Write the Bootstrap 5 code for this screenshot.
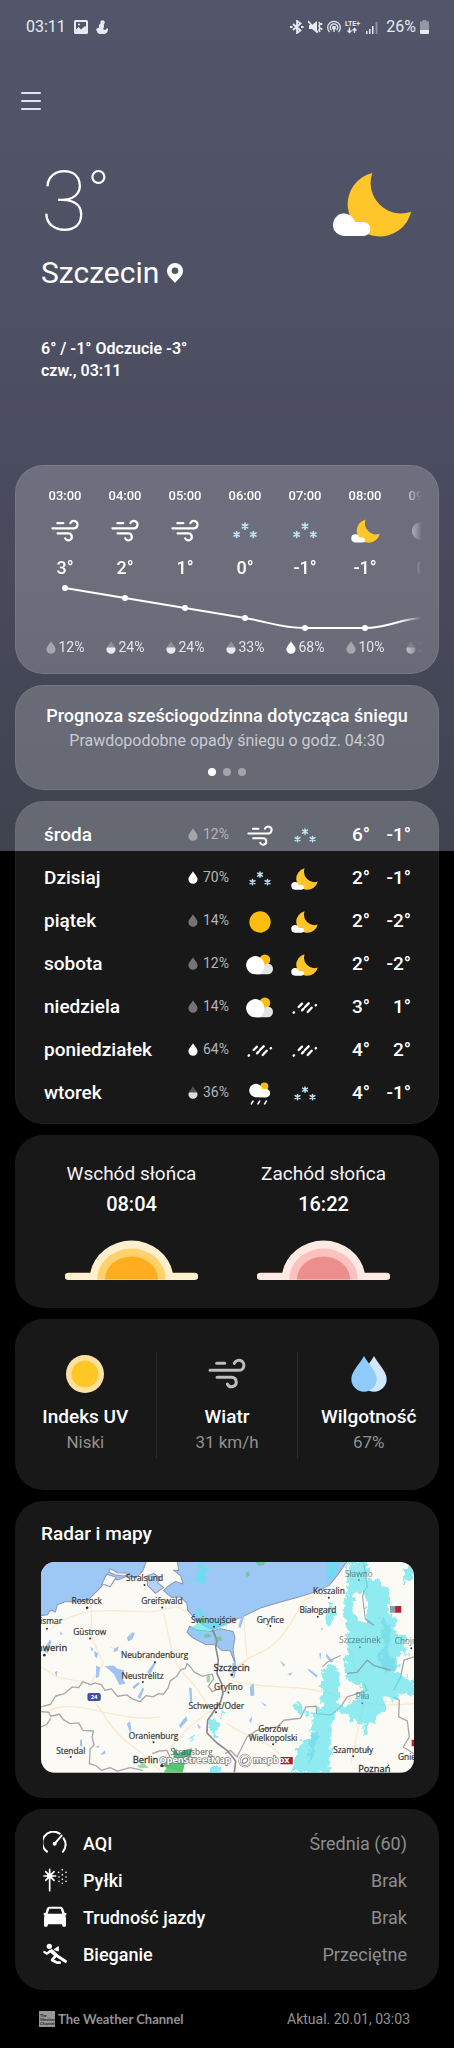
<!DOCTYPE html>
<html lang="pl">
<head>
<meta charset="utf-8">
<meta name="viewport" content="width=device-width, initial-scale=1">
<title>Pogoda – Szczecin</title>
<link href="https://cdn.jsdelivr.net/npm/bootstrap@5.3.0/dist/css/bootstrap.min.css" rel="stylesheet">
<style>
  body {
    font-family: Roboto, "Liberation Sans", sans-serif;
    color: #fff;
    background: #000 linear-gradient(#52566a, #505366 200px, #4c4d61 400px, #464859 640px, #3f434e 851px) no-repeat;
    background-size: 100% 851px;
  }
  svg { display: block; flex: none; }
  .statusbar { padding: 15px 25px 0 26px; font-size: 16px; line-height: 24px; color: #e8e9f2; }
  .menu-btn { margin: 50px 0 0 19px; color: #e0e1ee; }
  .current { padding: 47px 42px 83px 41px; }
  .temp-now { font-size: 84px; line-height: 84px; font-weight: 100; }
  .temp-now sup { font-size: 60px; line-height: 66px; font-weight: 200; top: 0; }
  .place { margin-top: 11px; }
  .city { font-size: 30px; line-height: 36px; font-weight: 400; }
  .feels { font-size: 16px; line-height: 22px; font-weight: 600; margin-top: 47px; }
  .stack { padding: 0 15px; gap: 11px; }
  .panel { border-radius: 28px; background: #181818; }
  .panel-glass { background: rgba(255,255,255,.2); box-shadow: inset 0 0 0 1px rgba(255,255,255,.08); }
  .hourly { padding: 21px 17px 19px 20px; }
  .hours {
    display: grid; grid-template-columns: repeat(7, 60px); grid-template-rows: 20px 49px 26px 58px 16px;
    justify-items: center; align-items: center; overflow: hidden;
    -webkit-mask-image: linear-gradient(to right, #000 calc(100% - 22px), transparent);
    mask-image: linear-gradient(to right, #000 calc(100% - 22px), transparent);
  }
  .hours .hour { font-size: 13px; line-height: 20px; font-weight: 500; }
  .hours .deg { font-size: 18px; line-height: 26px; font-weight: 500; }
  .hours .line { grid-column: 1 / -1; justify-self: start; }
  .hours .rain { font-size: 14px; line-height: 16px; color: #e3e4ea; gap: 3px; }
  .notice { padding: 19px 15px 14px; }
  .notice h2 { font-size: 18px; line-height: 24px; font-weight: 500; margin: 0; }
  .notice p { font-size: 16px; line-height: 26px; color: #c9cad2; margin: 0; }
  .pager button { width: 8px; height: 8px; border: 0; padding: 0; border-radius: 50%; background: #a3a4ae; }
  .pager button.on { background: #fff; }
  .pager { gap: 7px; margin-top: 14px; }
  .daily { padding: 13px 28px 9px; background: linear-gradient(rgba(255,255,255,.2) 50px, #181818 50px); box-shadow: inset 0 0 0 1px rgba(255,255,255,.04); }
  .days { width: 100%; table-layout: fixed; }
  .days tr { height: 43px; }
  .days th { font-size: 19px; font-weight: 500; }
  .days td { padding: 0; font-size: 19px; font-weight: 500; text-align: right; }
  .days td.rain { padding-right: 8px; font-size: 14px; font-weight: 400; color: #b4b4b8; white-space: nowrap; }
  .days .rain span { gap: 5px; }
  .days .sky svg { margin: auto; }
  .sun { padding: 27px 49px 27px 50px; }
  .sun h2 { font-size: 19px; line-height: 24px; font-weight: 400; margin: 0; color: #f2f2f2; }
  .sun p { font-size: 20px; line-height: 36px; font-weight: 500; margin: 0 0 18px; }
  .sun .half { width: 133px; white-space: nowrap; }
  .facts { padding: 33px 0 31px; }
  .facts > div { flex: 1 1 0; padding-bottom: 3px; }
  .facts > div + div { border-left: 1px solid #2b2b2b; }
  .facts .pic { height: 44px; display: flex; align-items: center; color: #bdbdbd; }
  .facts h2 { font-size: 19px; line-height: 24px; font-weight: 500; margin: 9px 0 0; }
  .facts p { font-size: 17px; line-height: 27px; margin: 0; color: #919191; }
  .radar { padding: 20px 25px 25px 26px; }
  .radar h2 { font-size: 19px; line-height: 25px; font-weight: 500; margin: 0 0 16px; }
  .radar .chart { border-radius: 14px; width: 100%; height: auto; font-family: "Open Sans", "Noto Sans", sans-serif; }
  .indices { padding: 16px 32px 17px 28px; margin: 0; font-size: 18px; font-weight: 500; line-height: 37px; }
  .indices dt { font-weight: 500; }
  .indices dd { margin: 0; color: #8d8d8d; font-weight: 400; }
  .source { padding: 17px 44px 17px 39px; font-size: 14px; line-height: 24px; color: #929292; }
  .source a { color: #929292; text-decoration: none; font-family: Lato, "Open Sans", sans-serif; font-weight: 700; font-size: 13px; gap: 3px; }
</style>
</head>
<body>

<svg width="0" height="0" class="position-absolute" aria-hidden="true">
  <defs>
    <symbol id="wind" viewBox="0 0 114 96">
      <g fill="none" stroke="currentColor" stroke-width="9" stroke-linecap="round">
        <path d="M26 16H50"/><path d="M6 37H92A15 15 0 1 0 79 16"/><path d="M27 58H71A14 14 0 1 1 58 78"/>
      </g>
    </symbol>
    <symbol id="moon" viewBox="998 65 240 196">
      <path fill="#ffc629" d="M1119 68A97 97 0 1 0 1236 185A92 92 0 0 1 1119 68Z"/>
      <path fill="#fff" d="M1033 258A34 34 0 1 1 1067 216H1092A21 21 0 0 1 1092 258Z"/>
    </symbol>
    <g id="flake" stroke="#bde3f5" stroke-width="5" stroke-linecap="round"><path d="M0-9V9M-8-5L8 5M-8 5L8-5"/></g>
    <symbol id="snow" viewBox="0 0 72 50">
      <use href="#flake" x="36" y="12"/><use href="#flake" x="11" y="37"/><use href="#flake" x="61" y="37"/>
    </symbol>
    <symbol id="sunny" viewBox="0 0 66 66"><circle cx="33" cy="33" r="32" fill="#fcbd0e"/></symbol>
    <symbol id="partly" viewBox="0 0 80 62">
      <circle cx="56" cy="17" r="16" fill="#fcbd0e"/>
      <path d="M30 60V40L64 28A16 16 0 0 1 64 60Z" fill="#e4e4e6"/>
      <path d="M27 60A27 27 0 1 1 52 22Q60 44 42 60Z" fill="#fff"/>
    </symbol>
    <symbol id="showers" viewBox="0 0 66 68">
      <circle cx="46" cy="13" r="12" fill="#fcbd0e"/>
      <path d="M20 45A20 20 0 1 1 40 20Q46 22 51 20A13 13 0 0 1 50 46Z" fill="#fff"/>
      <path d="M7 65L12 57M27 65L32 57M47 65L52 57" stroke="#fff" stroke-width="5" stroke-linecap="round"/>
    </symbol>
    <symbol id="sleet" viewBox="0 0 78 40">
      <g stroke="#fff" stroke-width="7" stroke-linecap="round">
        <path d="M5 34L6 33M20 17L30 7M39 17L50 6M30 27L35 22M47 32L59 19M71 12L72 11"/>
      </g>
    </symbol>
    <path id="dropshape" d="M15 1C19 9 29 17 29 26A14 13 0 0 1 1 26C1 17 11 9 15 1Z"/>
    <clipPath id="dropbottom"><rect x="0" y="20" width="30" height="22"/></clipPath>
    <symbol id="drop-low" viewBox="0 0 30 40"><use href="#dropshape" fill="#fff" opacity=".4"/></symbol>
    <symbol id="drop-mid" viewBox="0 0 30 40"><use href="#dropshape" fill="#fff" opacity=".25"/><use href="#dropshape" fill="#fff" opacity=".8" clip-path="url(#dropbottom)"/></symbol>
    <symbol id="drop-full" viewBox="0 0 30 40"><use href="#dropshape" fill="#fff"/></symbol>
    <filter id="ragged" x="0" y="0" width="1" height="1">
      <feTurbulence type="fractalNoise" baseFrequency=".06" numOctaves="3" seed="4" result="n"/>
      <feDisplacementMap in="SourceGraphic" in2="n" scale="34" xChannelSelector="R" yChannelSelector="G"/>
    </filter>
  </defs>
</svg>

<header>
  <div class="statusbar d-flex align-items-center justify-content-between">
    <div class="d-flex align-items-center">
      <span>03:11</span>
      <svg class="ms-2" width="14" height="14" viewBox="0 0 14 14"><path fill="currentColor" fill-rule="evenodd" d="M1.500 0H12.500A1.500 1.500 0 0 1 14 1.500V12.500A1.500 1.500 0 0 1 12.500 14H1.500A1.500 1.500 0 0 1 0 12.500V1.500A1.500 1.500 0 0 1 1.500 0ZM2 2V9.500L4.500 7L7 9.500L11 6L12 7V2Z"/><circle cx="5" cy="4.500" r="1" fill="currentColor"/></svg>
      <svg class="ms-2" width="12" height="14" viewBox="0 0 12 14" fill="currentColor"><circle cx="6.500" cy="2.500" r="2.200"/><circle cx="5.500" cy="6" r="2.600"/><path d="M0 10Q0 8.500 2 8L4 7H7L7.500 9.500L9.500 10L11 8L12 9Q12 13 8.500 14H3.500A3 3 0 0 1 1 11Z"/></svg>
    </div>
    <div class="d-flex align-items-center">
      <svg width="14" height="14" viewBox="0 0 14 14" fill="none" stroke="currentColor" stroke-width="1.800"><path d="M3 4L10.500 10.500L7 13V1L10.500 3.500L3 10"/><path d="M0 7H2.500M11 7H13.500"/></svg>
      <svg class="ms-1" width="15" height="14" viewBox="0 0 15 14"><path fill="currentColor" d="M1 5H4L9 1V13L4 9H1Z"/><path d="M0 1L10 12.500M11 2L12 4L11 6L12 8L11 10L12 12M13.500 3V5M13.500 8V10" stroke="currentColor" stroke-width="1.600" fill="none"/></svg>
      <svg class="ms-1" width="14" height="14" viewBox="0 0 14 14" fill="none" stroke="currentColor" stroke-width="1.300"><path d="M2.500 12A6.300 6.300 0 1 1 11.500 12M4.500 10.300A3.700 3.700 0 1 1 9.500 10.300"/><circle cx="7" cy="7.800" r="1.300" fill="currentColor"/><path d="M7 9V12"/></svg>
      <svg class="ms-1" width="17" height="16" viewBox="0 0 17 16" aria-label="LTE+"><text x="0" y="7" font-size="7" font-weight="700" fill="currentColor">LTE+</text><path d="M4.500 8.500V13M2.500 11.500L4.500 13.500L6.500 11.500M9.500 14V9.500M7.500 11.500L9.500 9.500L11.500 11.500" stroke="currentColor" stroke-width="1.400" fill="none"/></svg>
      <svg class="ms-1 me-2" width="12" height="13" viewBox="0 0 12 13" fill="currentColor"><path d="M0 10H1.500V13H0ZM3 8H4.500V13H3ZM6 5H7.500V13H6Z"/><path d="M9.500 1H11.500V13H9.500Z" opacity=".4"/></svg>
      <span>26%</span>
      <svg class="ms-1" width="9" height="14" viewBox="0 0 9 14" fill="currentColor"><path opacity=".45" d="M2.500 0H6.500V1.500H9V10H0V1.500H2.500Z"/><path d="M0 10H9V13A1 1 0 0 1 8 14H1A1 1 0 0 1 0 13Z"/></svg>
    </div>
  </div>
  <button type="button" class="menu-btn btn border-0 p-0 d-block" aria-label="Menu">
    <svg width="24" height="24" viewBox="0 0 24 24" stroke="currentColor" stroke-width="2" stroke-linecap="round"><path d="M3 4H21M3 12H21M3 20H21"/></svg>
  </button>
</header>

<main>
  <section class="current">
    <div class="d-flex justify-content-between align-items-center">
      <div class="temp-now d-flex align-items-start">3<sup>°</sup></div>
      <svg class="mt-1" width="80" height="65"><use href="#moon"/></svg>
    </div>
    <div class="place d-flex align-items-center">
      <h1 class="city m-0">Szczecin</h1>
      <svg class="ms-2" width="16" height="20" viewBox="0 0 16 20"><path fill="#fff" fill-rule="evenodd" d="M8 0A8 8 0 0 1 16 8C16 13 11 16 8 20C5 16 0 13 0 8A8 8 0 0 1 8 0ZM8 4.500A3.300 3.300 0 1 0 8 11.100A3.300 3.300 0 1 0 8 4.500Z"/></svg>
    </div>
    <div class="feels">6° / -1° Odczucie -3°<br>czw., 03:11</div>
  </section>

  <div class="stack d-flex flex-column">
    <section class="panel panel-glass hourly">
      <div class="hours">
        <span class="hour">03:00</span><span class="hour">04:00</span><span class="hour">05:00</span><span class="hour">06:00</span><span class="hour">07:00</span><span class="hour">08:00</span><span class="hour">09:00</span>
        <svg width="28" height="24"><use href="#wind"/></svg>
        <svg width="28" height="24"><use href="#wind"/></svg>
        <svg width="28" height="24"><use href="#wind"/></svg>
        <svg width="24" height="17"><use href="#snow"/></svg>
        <svg width="24" height="17"><use href="#snow"/></svg>
        <svg width="29" height="24"><use href="#moon"/></svg>
        <svg width="28" height="20" viewBox="0 0 28 20"><circle cx="10" cy="10" r="9" fill="#fff"/></svg>
        <span class="deg">3°</span><span class="deg">2°</span><span class="deg">1°</span><span class="deg">0°</span><span class="deg">-1°</span><span class="deg">-1°</span><span class="deg">0°</span>
        <svg class="line" width="420" height="58" viewBox="0 2 420 58" fill="#fff">
          <path d="M30 9L210 39C235 43 245 49 270 49H330C355 49 365 39 390 39" fill="none" stroke="#fff" stroke-width="2"/>
          <circle cx="30" cy="9" r="3"/><circle cx="90" cy="19" r="3"/><circle cx="150" cy="29" r="3"/><circle cx="210" cy="39" r="3"/><circle cx="270" cy="49" r="3"/><circle cx="330" cy="49" r="3"/>
        </svg>
        <span class="rain d-flex align-items-center"><svg width="10" height="13"><use href="#drop-low"/></svg>12%</span>
        <span class="rain d-flex align-items-center"><svg width="10" height="13"><use href="#drop-mid"/></svg>24%</span>
        <span class="rain d-flex align-items-center"><svg width="10" height="13"><use href="#drop-mid"/></svg>24%</span>
        <span class="rain d-flex align-items-center"><svg width="10" height="13"><use href="#drop-mid"/></svg>33%</span>
        <span class="rain d-flex align-items-center"><svg width="10" height="13"><use href="#drop-full"/></svg>68%</span>
        <span class="rain d-flex align-items-center"><svg width="10" height="13"><use href="#drop-low"/></svg>10%</span>
        <span class="rain d-flex align-items-center"><svg width="10" height="13"><use href="#drop-mid"/></svg>20%</span>
      </div>
    </section>

    <section class="panel panel-glass notice text-center">
      <h2>Prognoza sześciogodzinna dotycząca śniegu</h2>
      <p>Prawdopodobne opady śniegu o godz. 04:30</p>
      <div class="pager d-flex justify-content-center">
        <button type="button" class="on" aria-label="1"></button><button type="button" aria-label="2"></button><button type="button" aria-label="3"></button>
      </div>
    </section>

    <section class="panel daily">
      <table class="days">
        <colgroup><col><col style="width:62px"><col style="width:45px"><col style="width:45px"><col style="width:43px"><col style="width:41px"></colgroup>
        <tbody>
        <tr><th scope="row">środa</th><td class="rain"><span class="d-inline-flex align-items-center"><svg width="10" height="13"><use href="#drop-low"/></svg>12%</span></td><td class="sky"><svg width="26" height="22"><use href="#wind"/></svg></td><td class="sky"><svg width="22" height="15"><use href="#snow"/></svg></td><td>6°</td><td>-1°</td></tr>
        <tr><th scope="row">Dzisiaj</th><td class="rain"><span class="d-inline-flex align-items-center"><svg width="10" height="13"><use href="#drop-full"/></svg>70%</span></td><td class="sky"><svg width="22" height="15"><use href="#snow"/></svg></td><td class="sky"><svg width="27" height="22"><use href="#moon"/></svg></td><td>2°</td><td>-1°</td></tr>
        <tr><th scope="row">piątek</th><td class="rain"><span class="d-inline-flex align-items-center"><svg width="10" height="13"><use href="#drop-low"/></svg>14%</span></td><td class="sky"><svg width="22" height="22"><use href="#sunny"/></svg></td><td class="sky"><svg width="27" height="22"><use href="#moon"/></svg></td><td>2°</td><td>-2°</td></tr>
        <tr><th scope="row">sobota</th><td class="rain"><span class="d-inline-flex align-items-center"><svg width="10" height="13"><use href="#drop-low"/></svg>12%</span></td><td class="sky"><svg width="27" height="21"><use href="#partly"/></svg></td><td class="sky"><svg width="27" height="22"><use href="#moon"/></svg></td><td>2°</td><td>-2°</td></tr>
        <tr><th scope="row">niedziela</th><td class="rain"><span class="d-inline-flex align-items-center"><svg width="10" height="13"><use href="#drop-low"/></svg>14%</span></td><td class="sky"><svg width="27" height="21"><use href="#partly"/></svg></td><td class="sky"><svg width="26" height="14"><use href="#sleet"/></svg></td><td>3°</td><td>1°</td></tr>
        <tr><th scope="row">poniedziałek</th><td class="rain"><span class="d-inline-flex align-items-center"><svg width="10" height="13"><use href="#drop-full"/></svg>64%</span></td><td class="sky"><svg width="26" height="14"><use href="#sleet"/></svg></td><td class="sky"><svg width="26" height="14"><use href="#sleet"/></svg></td><td>4°</td><td>2°</td></tr>
        <tr><th scope="row">wtorek</th><td class="rain"><span class="d-inline-flex align-items-center"><svg width="10" height="13"><use href="#drop-mid"/></svg>36%</span></td><td class="sky"><svg width="22" height="23"><use href="#showers"/></svg></td><td class="sky"><svg width="22" height="15"><use href="#snow"/></svg></td><td>4°</td><td>-1°</td></tr>
        </tbody>
      </table>
    </section>

    <section class="panel sun d-flex justify-content-between text-center">
      <div class="half">
        <h2>Wschód słońca</h2>
        <p>08:04</p>
        <svg width="133" height="41" viewBox="0 0 400 122">
          <path fill="#fff0cd" d="M10 98H76A126 118 0 0 1 324 98H390A11 11 0 0 1 390 120H10A11 11 0 0 1 10 98Z"/>
          <path fill="#ffd16b" d="M97 118A103 93 0 0 1 303 118Z"/><path fill="#ffad1e" d="M120 118A80 69 0 0 1 280 118Z"/>
        </svg>
      </div>
      <div class="half">
        <h2>Zachód słońca</h2>
        <p>16:22</p>
        <svg width="133" height="41" viewBox="0 0 400 122">
          <path fill="#ffe9e3" d="M10 98H76A126 118 0 0 1 324 98H390A11 11 0 0 1 390 120H10A11 11 0 0 1 10 98Z"/>
          <path fill="#fbc1bf" d="M97 118A103 93 0 0 1 303 118Z"/><path fill="#ec8e8b" d="M120 118A80 69 0 0 1 280 118Z"/>
        </svg>
      </div>
    </section>

    <section class="panel facts d-flex text-center">
      <div class="d-flex flex-column align-items-center">
        <div class="pic"><svg width="38" height="38" viewBox="0 0 38 38"><circle cx="19" cy="19" r="19" fill="#ffe0a0"/><circle cx="19" cy="19" r="13.500" fill="#ffc726"/></svg></div>
        <h2>Indeks UV</h2><p>Niski</p>
      </div>
      <div class="d-flex flex-column align-items-center">
        <div class="pic"><svg width="38" height="32"><use href="#wind"/></svg></div>
        <h2>Wiatr</h2><p>31 km/h</p>
      </div>
      <div class="d-flex flex-column align-items-center">
        <div class="pic"><svg width="36" height="36" viewBox="0 0 108 108"><path fill="#cfe8fd" d="M69 0C80 22 107 45 107 69A38 38 0 0 1 31 69C31 45 60 20 69 0Z"/><path fill="#90ccfb" d="M39 0C50 22 77 45 77 69A38 38 0 0 1 1 69C1 45 30 20 39 0Z"/></svg></div>
        <h2>Wilgotność</h2><p>67%</p>
      </div>
    </section>

    <section class="panel radar">
      <h2>Radar i mapy</h2>
      <svg class="chart" viewBox="33 36 1117 631" role="img" aria-label="Radar i mapy">
        <rect x="33" y="36" width="1117" height="631" fill="#fcfaf5"/>
        <g fill="#9dc7f5" stroke="#8c97b8" stroke-width="3" stroke-linejoin="round">
          <path d="M30 30V197L52 194L62 180L76 186L82 164L104 155H146L172 152L190 134L212 112L226 88L240 98L246 84L262 90L292 78L318 84L338 62L350 30Z"/>
          <path d="M440 30L446 62L430 60L452 78L458 102L436 94L412 110L400 122L424 142L450 140L470 160L472 180L494 206L520 226L548 238L600 214L628 204L690 174L750 156L800 142L860 124L896 106L920 76L950 34Z"/>
          <path d="M350 78L370 70L390 84L382 98L400 112L376 130L362 116L352 106Z" fill="#b5d3f4"/>
          <path d="M214 104L230 72L258 82L250 94L240 110L226 104Z" fill="#fcfaf5"/>
          <path d="M236 66L240 56L262 68L300 70L282 78L260 76Z" fill="#fcfaf5"/>
          <path d="M478 228L500 240L540 244L570 236L608 244L614 262L608 298L614 340L600 302L574 300L556 284L524 282L486 262L470 246Z"/>
        </g>
        <g fill="none" stroke="#fae9cf" stroke-width="4">
          <path d="M60 240C110 190 180 180 260 182S360 190 400 178S450 170 480 196M184 160V260L220 340L180 400L80 380L33 350M400 190C420 260 420 330 460 370S520 440 540 480M240 290L330 330L420 310M190 450C230 500 240 540 310 590S360 640 390 660M390 640C440 560 480 520 560 470M60 480C140 440 260 520 390 500M600 380C640 300 700 330 760 250S800 150 850 140M600 390C700 420 800 400 900 430S1040 470 1150 460M590 520C640 560 700 560 760 620M960 300L1000 460L960 640M640 200L650 330L600 370"/>
        </g>
        <g fill="#9fc3f3">
          <path d="M290 262L308 246L314 250L306 268L294 274ZM252 296L266 288L262 302L250 306ZM192 302L204 310L200 324L194 318ZM198 346L210 352L206 380L198 384ZM224 348L250 346L262 356L282 360L278 386L286 400L268 404L258 386L252 372L236 358ZM350 366L372 336L378 338L360 372ZM306 410L324 396L330 400L312 416ZM322 440L338 412L342 416L330 446ZM476 412L484 414L486 458L480 456ZM446 524L468 498L472 510L450 534ZM290 520L300 514L304 542L298 544ZM376 560L392 552L390 562ZM150 570L156 566V588H150ZM40 300L60 268L64 274L52 310ZM74 366L82 362L80 380ZM90 244L98 250L92 256ZM180 290L190 296L186 304ZM500 520L512 530L506 536ZM196 590L208 584L206 592ZM210 614L224 600L226 610ZM658 410L670 398L672 436L660 438ZM748 330L764 344L760 350ZM770 372L786 366L780 376ZM832 354L862 376L858 382L834 362ZM866 310L872 308L870 330ZM886 308L908 334L902 338L888 322ZM690 454L708 464L704 468ZM656 510L666 498L662 520ZM872 232L878 236L872 242ZM606 340L618 330L614 380L606 384ZM636 190L642 198L630 236L624 228Z"/>
        </g>
        <g fill="none" stroke="#aaa7ab" stroke-width="4" stroke-linejoin="round">
          <path d="M33 470L62 462L76 438L104 430L126 410L146 412L158 394L182 404L194 398L214 404L224 420L244 416L262 438L290 434L306 446L330 454L348 436L368 440L386 430L400 432L414 412L420 392L440 378L452 358L466 354L470 340L482 352L492 366L516 378L546 372L550 386L534 408L546 424L560 418"/>
          <path d="M33 484L56 486L62 498L88 492L100 508L120 520L146 518L158 540L190 542L186 560L192 584L180 596L178 640L198 646L214 660L240 652L262 662M33 530L50 522L62 504M262 662L300 652L338 660M366 610L388 602L410 600L420 622M585 610L600 600L620 620L650 560L680 540L740 530L760 510L810 504L826 470L858 468V490L900 494L930 470L950 440L980 430L1010 420L1000 400M1000 40L1010 110L996 130L1006 210L1030 226M1090 440L1106 450L1104 500L1130 512L1136 560L1118 590L1150 610M1150 320L1120 330L1110 380L1090 420M950 370L980 366L1010 330L1030 346L1080 360M876 350L890 336L930 316"/>
          <path d="M546 238L560 270L556 290L564 330L560 370L574 400L578 430L570 456L550 484L532 510L530 548L560 578L590 600L616 632L612 667" stroke="#8b8890" stroke-width="5"/>
        </g>
        <g fill="#5be3ee" opacity=".68" filter="url(#ragged)">
          <path d="M892 36H930L906 84L892 96ZM950 36H1014L1016 90L1040 90L1074 116L1070 190L1094 200L1096 250L1128 262L1122 300L1096 330L1100 370L1136 384L1150 400V440L1110 430L1090 450L1062 440L1064 480L1040 500L1034 520L1014 520L1008 566L1000 562L998 516L974 526L954 494L916 484L904 540L896 667H784L800 590L840 560L850 490L872 470L874 390L888 340L918 350L930 400L922 460L946 470L990 430L996 408L962 396L944 380L950 300L948 240L940 210L950 110Z"/>
          <path d="M890 170L908 160L912 200L900 224L890 210ZM792 466L812 458L820 484L796 482ZM820 480H836V496H824ZM500 40H530L528 90L512 110L496 90L484 96L504 66ZM500 170L516 180L512 206H550L596 214V226L556 240L500 250L484 236L500 220ZM546 500L566 520L560 556L540 550L536 510ZM576 480L586 490L578 502ZM540 650L560 640L574 667H536ZM470 560L494 556L490 572ZM1120 60L1150 36V90L1120 96ZM1126 300L1138 310L1128 322Z"/>
        </g>
        <path d="M970 134L1002 124L1012 160L1004 216L988 212L966 190Z" fill="#fcfaf5" filter="url(#ragged)"/>
        <path d="M1050 200L1080 230L1074 320L1110 350L1060 370L1046 330L1056 280ZM840 560L860 540L850 620L830 640Z" fill="#45b9cf" opacity=".25" filter="url(#ragged)"/>
        <path d="M1000 124L996 140L1004 206L1030 226M950 370L980 366L1010 330L1030 346L1080 360" fill="none" stroke="#8aa0a8" stroke-width="3"/>
        <g fill="#58c66a">
          <path d="M430 590L444 610L460 600L486 594L480 624L464 640L456 664L420 656L398 648L410 630L430 626Z" fill="#55b98f"/><path d="M416 640L440 632L462 650L456 667H400Z" opacity=".9"/>
          <path d="M320 646L340 638L356 652L330 654ZM520 254L536 250L544 260L524 264ZM552 262L574 258V272L556 274ZM676 36H704L700 46L684 48ZM646 68L656 64L658 78L648 80ZM528 380L540 374L538 396L530 396Z" opacity=".6"/>
        </g>
        <rect x="172" y="428" width="40" height="24" rx="6" fill="#3c4fa0"/><text x="192" y="447" text-anchor="middle" font-size="18" font-weight="700" fill="#fff">24</text>
        <path d="M1078 168H1096V188H1078Z" fill="#8aa1ad"/><path d="M1094 168H1112V188H1094ZM1143 568H1150V588H1143Z" fill="#bc2030"/>
        <g fill="#333">
          <circle cx="171" cy="173" r="4"/><circle cx="343" cy="105" r="3"/><circle cx="396" cy="172" r="3"/><circle cx="51" cy="236" r="3"/><circle cx="180" cy="265" r="3"/><circle cx="43" cy="315" r="4"/><circle cx="374" cy="336" r="3"/><circle cx="338" cy="395" r="3"/><circle cx="370" cy="576" r="3"/><circle cx="122" cy="620" r="3"/><circle cx="395" cy="646" r="5"/><circle cx="551" cy="230" r="3"/><circle cx="557" cy="486" r="3"/><circle cx="604" cy="374" r="4"/><circle cx="594" cy="427" r="3"/><circle cx="720" cy="228" r="3"/><circle cx="862" cy="200" r="3"/><circle cx="895" cy="143" r="3"/><circle cx="728" cy="582" r="3"/><circle cx="968" cy="618" r="3"/><circle cx="1142" cy="294" r="3"/><circle cx="988" cy="291" r="3" opacity=".5"/><circle cx="995" cy="459" r="3" opacity=".5"/><circle cx="985" cy="90" r="3" opacity=".5"/>
        </g>
        <g font-size="25" fill="#3c3c3c" stroke="#3c3c3c" stroke-width=".7" text-anchor="middle">
          <text x="343" y="94">Stralsund</text><text x="170" y="161">Rostock</text><text x="395" y="161">Greifswald</text><text x="52" y="223">Wismar</text><text x="179" y="254">Güstrow</text><text x="373" y="325">Neubrandenburg</text><text x="337" y="385">Neustrelitz</text><text x="370" y="567">Oranienburg</text><text x="122" y="611">Stendal</text><text x="484" y="613" opacity=".65">Strausberg</text><text x="550" y="218">Świnoujście</text><text x="558" y="475">Schwedt/Oder</text><text x="594" y="418">Gryfino</text><text x="720" y="218">Gryfice</text><text x="895" y="132">Koszalin</text><text x="862" y="190">Białogard</text><text x="728" y="545">Gorzów</text><text x="728" y="572">Wielkopolski</text><text x="968" y="609">Szamotuły</text>
          <g opacity=".5"><text x="985" y="80">Sławno</text><text x="988" y="280">Szczecinek</text><text x="996" y="446">Piła</text><text x="1142" y="283">Chojnice</text></g>
          <text x="1150" y="629">Gniezno</text>
        </g>
        <g font-size="28" fill="#333" stroke="#333" stroke-width=".8" text-anchor="middle">
          <text x="52" y="303">Schwerin</text><text x="604" y="362">Szczecin</text><text x="346" y="638">Berlin</text><text x="1031" y="664">Poznań</text>
        </g>
        <path d="M750 620H787V642H750Z" fill="#a3232e"/>
        <g font-size="27" font-weight="700" fill="#fff" stroke="#777" stroke-width="4" paint-order="stroke">
          <text x="388" y="639">OpenStreetMap</text><text x="668" y="639">mapb<tspan stroke="none">ox</tspan></text>
        </g>
        <circle cx="644" cy="631" r="17" fill="none" stroke="#777" stroke-width="6"/><circle cx="644" cy="631" r="17" fill="none" stroke="#fff" stroke-width="3"/><path d="M636 638Q634 626 645 623Q652 622 652 630Q648 640 636 638Z" fill="#fff" stroke="#777" stroke-width="3"/>
      </svg>
    </section>

    <dl class="panel indices">
      <div class="d-flex align-items-center"><svg width="24" height="24" viewBox="0 0 72 72" fill="none" stroke="#fff" stroke-width="6" stroke-linecap="round"><path d="M12 62A33 33 0 0 1 50 8M62 22A33 33 0 0 1 60 62M35 38L56 14"/><circle cx="35" cy="38" r="3" fill="#fff"/></svg><dt class="ms-3">AQI</dt><dd class="ms-auto">Średnia (60)</dd></div>
      <div class="d-flex align-items-center"><svg width="24" height="24" viewBox="0 0 72 72" fill="#fff" stroke="#fff" stroke-width="5" stroke-linecap="round"><path d="M20 4V68M3 24H38M8 11L33 37M33 11L8 37"/><g stroke="none"><circle cx="20" cy="24" r="8"/><circle cx="47" cy="13" r="2.500"/><circle cx="58" cy="5" r="2.500"/><circle cx="69" cy="13" r="2.500"/><circle cx="58" cy="20" r="2.500"/><circle cx="48" cy="27" r="2.500"/><circle cx="69" cy="27" r="2.500"/><circle cx="58" cy="34" r="2.500"/><circle cx="69" cy="40" r="2.500"/><circle cx="48" cy="40" r="2.500"/><circle cx="58" cy="46" r="2.500"/></g></svg><dt class="ms-3">Pyłki</dt><dd class="ms-auto">Brak</dd></div>
      <div class="d-flex align-items-center"><svg width="24" height="24" viewBox="0 0 72 72" fill="#fff"><path fill-rule="evenodd" d="M18 5H54Q58 5 60 10L65 24L70 24V30L67 32Q69 36 69 40V62Q69 65 66 65H60Q58 65 57 58H15Q14 65 12 65H6Q3 65 3 62V40Q3 36 5 32L2 30V24L7 24L12 10Q14 5 18 5ZM19 11L14 26H58L53 11Z"/></svg><dt class="ms-3">Trudność jazdy</dt><dd class="ms-auto">Brak</dd></div>
      <div class="d-flex align-items-center"><svg width="24" height="24" viewBox="0 0 72 72" fill="none" stroke="#fff" stroke-linecap="round" stroke-linejoin="round"><circle cx="19" cy="13" r="8" fill="#fff" stroke="none"/><path d="M4 30L12 35L22 27L38 41" stroke-width="7"/><path d="M26 26L42 41L67 58" stroke-width="9"/><path d="M36 44L27 54L42 62H50" stroke-width="8"/><path d="M34 22L46 14V26Z" fill="#fff" stroke-width="3"/></svg><dt class="ms-3">Bieganie</dt><dd class="ms-auto">Przeciętne</dd></div>
    </dl>
  </div>
</main>

<footer class="source d-flex justify-content-between align-items-center">
  <a href="#" class="d-flex align-items-center"><svg width="16" height="16" viewBox="0 0 16 16"><rect width="16" height="16" fill="#969696"/><g font-size="4" font-weight="700" fill="#222"><text x="1" y="6">The</text><text x="1" y="10">Weather</text><text x="1" y="14">Channel</text></g></svg>The Weather Channel</a>
  <span>Aktual. 20.01, 03:03</span>
</footer>

<script src="https://cdn.jsdelivr.net/npm/bootstrap@5.3.0/dist/js/bootstrap.bundle.min.js"></script>
</body>
</html>
